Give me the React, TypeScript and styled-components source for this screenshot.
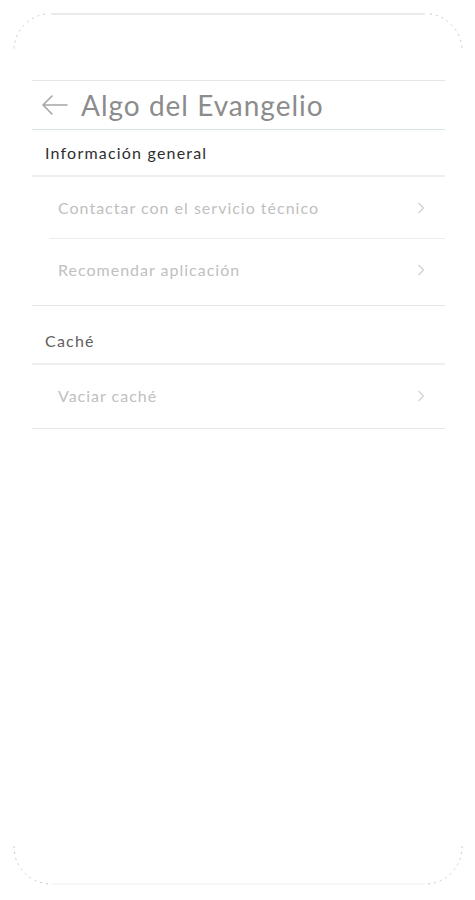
import * as React from "react";
import styled, { createGlobalStyle } from "styled-components";

const GlobalStyle = createGlobalStyle`
  html, body {
    margin: 0;
    padding: 0;
    background: #fff;
  }
  body {
    font-family: Lato, "Open Sans", sans-serif;
  }
`;

const Device = styled.div`
  position: relative;
  width: 475px;
  height: 900px;
  background: #fff;
  overflow: hidden;
`;

const FrameOutline = styled.svg`
  position: absolute;
  left: 0;
  top: 0;
  pointer-events: none;
`;

const Screen = styled.div`
  padding: 80px 30px 0 32px;
`;

const Header = styled.div`
  display: flex;
  align-items: center;
  gap: 13px;
  height: 48px;
  padding-left: 9px;
  border-top: 1px solid #e6e6e6;
  border-bottom: 1px solid #d6e6e3;
`;

const BackButton = styled.button`
  display: flex;
  align-items: center;
  padding: 0;
  border: none;
  background: none;
  color: #a6a6a6;
`;

const Title = styled.h1`
  margin: 0;
  font-size: 28px;
  font-weight: 400;
  color: #8c8c8c;
  letter-spacing: 1px;
`;

const Section = styled.section<{ $tail?: number }>`
  padding-bottom: ${p => p.$tail ?? 0}px;
  border-bottom: 1px solid #e8e8e8;
`;

const SectionTitle = styled.div<{ $top: number; $dark?: boolean }>`
  padding: ${p => p.$top}px 0 12px 13px;
  font-size: 16px;
  line-height: 20px;
  letter-spacing: 1.2px;
  color: ${p => (p.$dark ? "#2e2e2e" : "#606060")};
  border-bottom: 2px solid #efefef;
`;

const ItemRow = styled.div<{ $divider?: boolean }>`
  display: flex;
  align-items: center;
  justify-content: space-between;
  height: 61px;
  margin-left: 17px;
  padding: 0 20px 0 9px;
  border-bottom: ${p => (p.$divider ? "1px solid #ececec" : "none")};
`;

const ItemLabel = styled.span`
  font-size: 16px;
  letter-spacing: 1px;
  color: #c0c0c0;
`;

const Chevron = () => (
  <svg width="8" height="12" viewBox="0 0 8 12">
    <path d="M1.5 1 L6.5 6 L1.5 11" fill="none" stroke="#d0d0d0" strokeWidth="1.2" />
  </svg>
);

const ArrowLeft = () => (
  <svg width="27" height="20" viewBox="0 0 27 20">
    <path
      d="M26 10 H2 M11 1 L2 10 L11 19"
      fill="none"
      stroke="currentColor"
      strokeWidth="1.6"
      strokeLinecap="round"
      strokeLinejoin="round"
    />
  </svg>
);

const Outline = () => (
  <FrameOutline width="475" height="900" viewBox="0 0 475 900">
    <line x1="51" y1="14" x2="425" y2="14" stroke="#e4e4e4" strokeWidth="1.6" />
    <line x1="51" y1="884" x2="425" y2="884" stroke="#f1f1f1" strokeWidth="1.2" />
    <g fill="none" stroke="#bdbdbd" strokeWidth="1" strokeDasharray="2 4" opacity="0.8">
      <path d="M45 14 A37 37 0 0 0 14 51" />
      <path d="M430 14 A37 37 0 0 1 462 51" />
      <path d="M14 846 A37 37 0 0 0 51 884" />
      <path d="M462 846 A37 37 0 0 1 425 884" />
    </g>
  </FrameOutline>
);

interface Item {
  label: string;
}

const generalItems: Item[] = [
  { label: "Contactar con el servicio técnico" },
  { label: "Recomendar aplicación" }
];

const cacheItems: Item[] = [{ label: "Vaciar caché" }];

const renderItems = (items: Item[]) =>
  items.map((item, i) => (
    <ItemRow key={item.label} $divider={i < items.length - 1}>
      <ItemLabel>{item.label}</ItemLabel>
      <Chevron />
    </ItemRow>
  ));

export default function App() {
  return (
    <Device>
      <GlobalStyle />
      <Screen>
        <Header>
          <BackButton aria-label="Volver">
            <ArrowLeft />
          </BackButton>
          <Title>Algo del Evangelio</Title>
        </Header>
        <Section $tail={5}>
          <SectionTitle $top={13} $dark>Información general</SectionTitle>
          {renderItems(generalItems)}
        </Section>
        <Section $tail={2}>
          <SectionTitle $top={25}>Caché</SectionTitle>
          {renderItems(cacheItems)}
        </Section>
      </Screen>
      <Outline />
    </Device>
  );
}
